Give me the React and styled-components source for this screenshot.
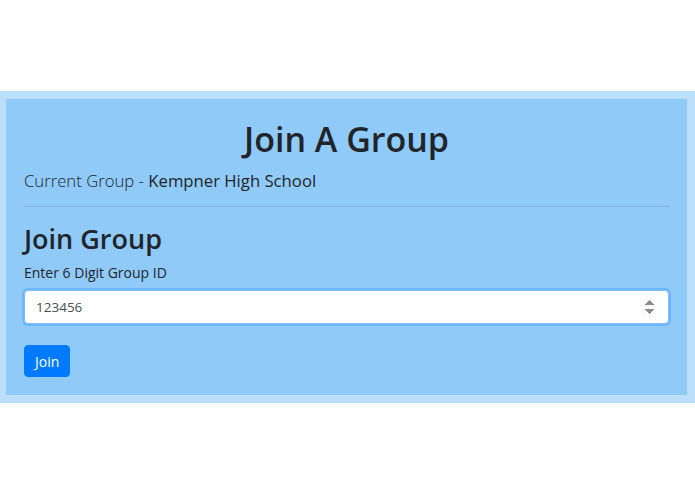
import { createGlobalStyle } from "styled-components";
import styled from "styled-components";

const Global = createGlobalStyle`
  * { box-sizing: border-box; }
  body {
    margin: 0;
    background: #fff;
    font-family: "Open Sans", "Noto Sans", sans-serif;
    color: #212529;
  }
`;

const Band = styled.div`
  margin-top: 91px;
  background: #bbdefb;
  padding: 8px 8px 8px 6px;
`;

const Panel = styled.div`
  background: #90caf9;
  padding: 19px 18px 18px;
`;

const Title = styled.h1`
  margin: 0 0 6px;
  text-align: center;
  font-size: 34px;
  font-weight: 600;
  line-height: 43px;
`;

const Current = styled.p`
  margin: 0;
  font-size: 16.7px;
  font-weight: 300;
  line-height: 28px;

  b {
    font-weight: 400;
  }
`;

const Rule = styled.hr`
  margin: 11px 0 15px;
  border: 0;
  border-top: 1px solid rgba(0, 0, 0, 0.1);
`;

const Heading = styled.h2`
  margin: 0 0 6px;
  font-size: 27px;
  font-weight: 600;
  line-height: 34px;
`;

const Label = styled.label`
  display: block;
  font-size: 14px;
  line-height: 21px;
  margin-bottom: 7px;
`;

const Input = styled.input`
  display: block;
  width: 100%;
  height: 34px;
  padding: 4px 11px;
  font-family: inherit;
  font-size: 13.5px;
  color: #495057;
  background: #fff;
  border: 1px solid #80bdff;
  border-radius: 4px;
  outline: 0;
  box-shadow: 0 0 0 2px rgba(0, 123, 255, 0.25);
`;

const Button = styled.button`
  margin-top: 21px;
  height: 32px;
  padding: 0 10px;
  font-family: inherit;
  font-size: 14px;
  color: #fff;
  background: #007bff;
  border: 1px solid #007bff;
  border-radius: 4px;
`;

export default function App() {
  return (
    <>
      <Global />
      <Band>
        <Panel>
          <Title>Join A Group</Title>
          <Current>
            Current Group - <b>Kempner High School</b>
          </Current>
          <Rule />
          <Heading>Join Group</Heading>
          <Label htmlFor="gid">Enter 6 Digit Group ID</Label>
          <Input id="gid" type="number" defaultValue="123456" autoFocus />
          <Button>Join</Button>
        </Panel>
      </Band>
    </>
  );
}
